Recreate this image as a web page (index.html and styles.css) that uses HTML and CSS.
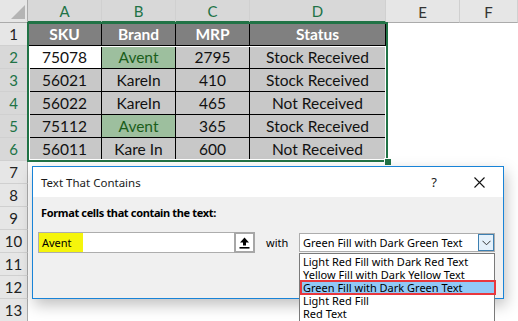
FILE: index.html
```html
<!DOCTYPE html>
<html>
<head>
<meta charset="utf-8">
<link rel="stylesheet" href="styles.css">
</head>
<body>
<div class="sheet">
  <div class="grid">
    <div class="corner"><svg width="28" height="23" viewBox="0 0 28 23"><polygon points="11,19 25,5 25,19" fill="#b4b4b4"/></svg></div>
    <div class="ch sel-ch">A</div>
    <div class="ch sel-ch">B</div>
    <div class="ch sel-ch">C</div>
    <div class="ch sel-ch">D</div>
    <div class="ch">E</div>
    <div class="ch">F</div>

    <div class="rh">1</div>
    <div class="c hd">SKU</div>
    <div class="c hd">Brand</div>
    <div class="c hd">MRP</div>
    <div class="c hd">Status</div>
    <div class="e"></div><div class="e"></div>

    <div class="rh sel-rh">2</div>
    <div class="c active">75078</div>
    <div class="c green">Avent</div>
    <div class="c">2795</div>
    <div class="c">Stock Received</div>
    <div class="e"></div><div class="e"></div>

    <div class="rh sel-rh">3</div>
    <div class="c">56021</div>
    <div class="c">KareIn</div>
    <div class="c">410</div>
    <div class="c">Stock Received</div>
    <div class="e"></div><div class="e"></div>

    <div class="rh sel-rh">4</div>
    <div class="c">56022</div>
    <div class="c">KareIn</div>
    <div class="c">465</div>
    <div class="c">Not Received</div>
    <div class="e"></div><div class="e"></div>

    <div class="rh sel-rh">5</div>
    <div class="c">75112</div>
    <div class="c green">Avent</div>
    <div class="c">365</div>
    <div class="c">Stock Received</div>
    <div class="e"></div><div class="e"></div>

    <div class="rh sel-rh">6</div>
    <div class="c last">56011</div>
    <div class="c last">Kare In</div>
    <div class="c last">600</div>
    <div class="c last">Not Received</div>
    <div class="e"></div><div class="e"></div>

    <div class="rh">7</div><div class="e span6"></div>
    <div class="rh">8</div><div class="e span6"></div>
    <div class="rh">9</div><div class="e span6"></div>
    <div class="rh">10</div><div class="e span6"></div>
    <div class="rh">11</div><div class="e span6"></div>
    <div class="rh">12</div><div class="e span6"></div>
    <div class="rh">13</div><div class="e span6"></div>
  </div>

  <div class="selection"></div>
  <div class="selection-inner"></div>
  <div class="handle"></div>

  <div class="dialog">
    <div class="titlebar">
      <span class="title">Text That Contains</span>
      <span class="help">?</span>
      <svg class="close" width="11" height="11" viewBox="0 0 11 11"><path d="M0.5 0.5 L10.5 10.5 M10.5 0.5 L0.5 10.5" stroke="#111" stroke-width="1.1" fill="none"/></svg>
    </div>
    <div class="body">
      <div class="label">Format cells that contain the text:</div>
      <div class="row">
        <div class="input"><span class="hl">Avent</span></div>
        <div class="pick">
          <svg width="11" height="12" viewBox="0 0 11 12"><polygon points="5.5,0.5 10,5.5 7,5.5 7,8.5 4,8.5 4,5.5 1,5.5" fill="#000"/><rect x="0.5" y="10" width="10" height="1.6" fill="#000"/></svg>
        </div>
        <span class="with">with</span>
        <div class="select">
          <span class="sel-text">Green Fill with Dark Green Text</span>
          <div class="drop"><svg width="9" height="6" viewBox="0 0 9 6"><path d="M0.5 0.8 L4.5 4.8 L8.5 0.8" stroke="#333" stroke-width="1" fill="none"/></svg></div>
        </div>
      </div>
    </div>
    <div class="list">
      <div class="opt">Light Red Fill with Dark Red Text</div>
      <div class="opt">Yellow Fill with Dark Yellow Text</div>
      <div class="opt on">Green Fill with Dark Green Text</div>
      <div class="opt">Light Red Fill</div>
      <div class="opt">Red Text</div>
      <div class="mark"></div>
    </div>
  </div>
</div>
</body>
</html>
```
FILE: styles.css
```css
html, body {
  margin: 0;
  padding: 0;
  background: #fff;
  overflow: hidden;
}
.sheet {
  position: relative;
  width: 518px;
  height: 321px;
  overflow: hidden;
  font-family: Lato, "Open Sans", sans-serif;
}
.grid {
  display: grid;
  grid-template-columns: 28px 74px 74px 74px 136px 74px 58px;
  grid-template-rows: 23px;
  grid-auto-rows: 23px;
}
.corner {
  background: #e6e6e6;
  border-right: 1px solid #ababab;
  border-bottom: 1px solid #ababab;
  box-sizing: border-box;
}
.corner svg { display: block; }
.ch {
  box-sizing: border-box;
  background: #e6e6e6;
  border-right: 1px solid #d0d0d0;
  border-bottom: 1px solid #ababab;
  display: flex;
  align-items: center;
  justify-content: center;
  font-size: 15px;
  color: #333;
  padding-top: 1px;
}
.ch.sel-ch {
  background: #d8d8d8;
  color: #217346;
  border-bottom: 2px solid #217346;
}
.rh {
  box-sizing: border-box;
  background: #e6e6e6;
  border-right: 1px solid #ababab;
  border-bottom: 1px solid #d0d0d0;
  display: flex;
  align-items: center;
  justify-content: center;
  font-size: 15px;
  color: #222;
}
.rh.sel-rh {
  background: #d8d8d8;
  color: #217346;
}
.c {
  box-sizing: border-box;
  background: #c8c8c8;
  border-right: 1px solid #000;
  border-bottom: 1px solid #000;
  display: flex;
  align-items: center;
  justify-content: center;
  font-size: 15.5px;
  color: #111;
}
.c.hd {
  background: #808080;
  color: #fff;
  font-weight: 700;
}
.c.active { background: #fff; }
.c.green {
  background: #9dbf9e;
  color: #1b5e1b;
}
.e { background: #fff; }
.span6 { grid-column: span 6; }

.selection {
  position: absolute;
  left: 27px;
  top: 22px;
  width: 361px;
  height: 140px;
  border: 2px solid #217346;
  box-sizing: border-box;
}
.selection-inner {
  position: absolute;
  left: 29px;
  top: 46px;
  width: 357px;
  height: 114px;
  border: 1px solid #fff;
  box-sizing: border-box;
}
.handle {
  position: absolute;
  left: 384px;
  top: 158px;
  width: 6px;
  height: 6px;
  background: #217346;
  border: 1px solid #fff;
}

.dialog {
  position: absolute;
  left: 32px;
  top: 166px;
  width: 472px;
  height: 133px;
  box-sizing: border-box;
  border: 1px solid #1883d7;
  background: #f0f0f0;
  box-shadow: 2px 6px 14px rgba(0, 0, 0, 0.25);
  font-family: "Noto Sans", "Open Sans", sans-serif;
  font-size: 11px;
  color: #000;
}
.titlebar {
  height: 30px;
  background: #fff;
  display: flex;
  align-items: center;
  padding-left: 8px;
}
.title { flex: 1; color: #1a1a1a; font-size: 11.5px; }
.help {
  font-size: 13px;
  margin-right: 37px;
  color: #222;
}
.close { margin-right: 18px; display: block; }
.body {
  padding: 8px 0 0 5px;
}
.label {
  font-weight: 700;
  line-height: 15px;
  padding-left: 3px;
  letter-spacing: -0.35px;
}
.row {
  display: flex;
  align-items: center;
  margin-top: 12px;
  height: 21px;
}
.input {
  box-sizing: border-box;
  width: 196px;
  height: 21px;
  background: #fff;
  border: 1px solid #adadad;
  border-right: none;
  display: flex;
  align-items: stretch;
}
.hl {
  background: #f5f50c;
  width: 44px;
  display: flex;
  align-items: center;
  padding-left: 3px;
  box-sizing: border-box;
}
.pick {
  box-sizing: border-box;
  width: 21px;
  height: 21px;
  border: 2px solid #a7a7a7;
  background: #fff;
  display: flex;
  align-items: center;
  justify-content: center;
}
.pick svg { display: block; }
.with {
  margin-left: 11px;
  width: 33px;
}
.select {
  box-sizing: border-box;
  width: 196px;
  height: 19px;
  background: #fff;
  border: 1px solid #adadad;
  display: flex;
  align-items: center;
  padding-left: 3px;
}
.sel-text { flex: 1; }
.drop {
  box-sizing: border-box;
  width: 16px;
  height: 17px;
  border: 1px solid #3c7fb1;
  background: #e5f1fb;
  display: flex;
  align-items: center;
  justify-content: center;
}
.drop svg { display: block; }
.list {
  position: absolute;
  left: 266px;
  top: 86px;
  width: 196px;
  height: 80px;
  box-sizing: border-box;
  background: #fff;
  border: 1px solid #7a7a7a;
  padding-top: 1px;
}
.opt {
  height: 13px;
  line-height: 13px;
  padding-left: 3px;
  white-space: nowrap;
}
.opt.on { background: #91c9f7; }
.mark {
  position: absolute;
  left: 0;
  top: 26px;
  width: 196px;
  height: 15px;
  box-sizing: border-box;
  border: 2px solid #e8373d;
}
```
